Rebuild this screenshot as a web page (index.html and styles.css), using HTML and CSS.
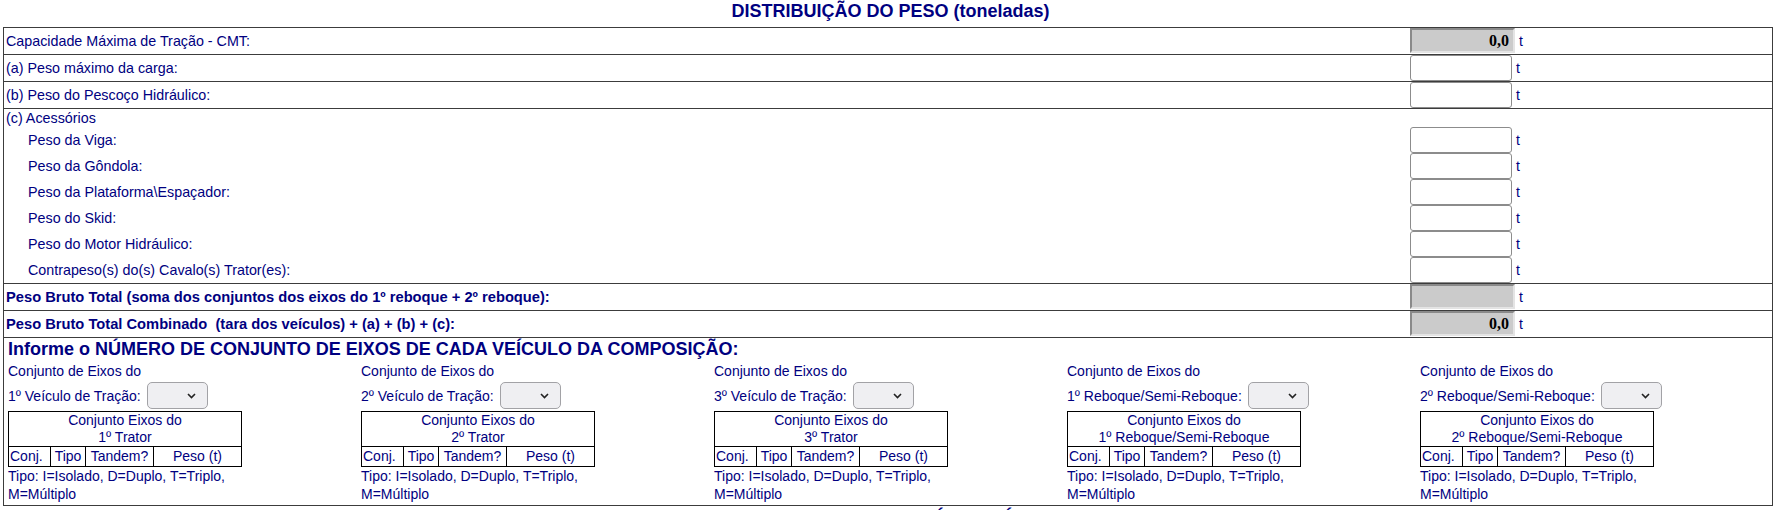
FILE: index.html
```html
<!DOCTYPE html>
<html lang="pt-BR">
<head>
<meta charset="utf-8">
<title>Distribuição do Peso</title>
<link rel="stylesheet" href="styles.css">
</head>
<body>
<div class="page">
  <h1 class="title">DISTRIBUIÇÃO DO PESO (toneladas)</h1>
  <div class="box">
    <div class="row">
      <span class="label">Capacidade Máxima de Tração - CMT:</span>
      <span class="val"><input class="ro" type="text" value="0,0" readonly><span class="unit">t</span></span>
    </div>
    <div class="row">
      <span class="label">(a) Peso máximo da carga:</span>
      <span class="val"><input class="in" type="text"><span class="unit">t</span></span>
    </div>
    <div class="row">
      <span class="label">(b) Peso do Pescoço Hidráulico:</span>
      <span class="val"><input class="in" type="text"><span class="unit">t</span></span>
    </div>
    <div class="group">
      <div class="glabel">(c) Acessórios</div>
      <div class="sub"><span class="label">Peso da Viga:</span><span class="val"><input class="in" type="text"><span class="unit">t</span></span></div>
      <div class="sub"><span class="label">Peso da Gôndola:</span><span class="val"><input class="in" type="text"><span class="unit">t</span></span></div>
      <div class="sub"><span class="label">Peso da Plataforma\Espaçador:</span><span class="val"><input class="in" type="text"><span class="unit">t</span></span></div>
      <div class="sub"><span class="label">Peso do Skid:</span><span class="val"><input class="in" type="text"><span class="unit">t</span></span></div>
      <div class="sub"><span class="label">Peso do Motor Hidráulico:</span><span class="val"><input class="in" type="text"><span class="unit">t</span></span></div>
      <div class="sub"><span class="label">Contrapeso(s) do(s) Cavalo(s) Trator(es):</span><span class="val"><input class="in" type="text"><span class="unit">t</span></span></div>
    </div>
    <div class="row strong">
      <span class="label">Peso Bruto Total (soma dos conjuntos dos eixos do 1º reboque + 2º reboque):</span>
      <span class="val"><input class="ro" type="text" value="" readonly><span class="unit">t</span></span>
    </div>
    <div class="row strong">
      <span class="label">Peso Bruto Total Combinado&nbsp; (tara dos veículos) + (a) + (b) + (c):</span>
      <span class="val"><input class="ro" type="text" value="0,0" readonly><span class="unit">t</span></span>
    </div>
    <div class="section">
      <h2 class="sec-title">Informe o NÚMERO DE CONJUNTO DE EIXOS DE CADA VEÍCULO DA COMPOSIÇÃO:</h2>
      <div class="vehicles">
        <div class="veh">
          <div class="vline">Conjunto de Eixos do</div>
          <div class="vsel">1º Veículo de Tração: <span class="sel"><svg width="9" height="6" viewBox="0 0 9 6"><path d="M1 1 L4.5 4.5 L8 1" fill="none" stroke="#222" stroke-width="1.6"/></svg></span></div>
          <table class="mini">
            <colgroup><col class="w1"><col class="w2"><col class="w3"><col></colgroup>
            <tr><th colspan="4">Conjunto Eixos do<br>1º Trator</th></tr>
            <tr><td class="c1">Conj.</td><td>Tipo</td><td>Tandem?</td><td>Peso (t)</td></tr>
          </table>
          <div class="note">Tipo: I=Isolado, D=Duplo, T=Triplo, M=Múltiplo</div>
        </div>
        <div class="veh">
          <div class="vline">Conjunto de Eixos do</div>
          <div class="vsel">2º Veículo de Tração: <span class="sel"><svg width="9" height="6" viewBox="0 0 9 6"><path d="M1 1 L4.5 4.5 L8 1" fill="none" stroke="#222" stroke-width="1.6"/></svg></span></div>
          <table class="mini">
            <colgroup><col class="w1"><col class="w2"><col class="w3"><col></colgroup>
            <tr><th colspan="4">Conjunto Eixos do<br>2º Trator</th></tr>
            <tr><td class="c1">Conj.</td><td>Tipo</td><td>Tandem?</td><td>Peso (t)</td></tr>
          </table>
          <div class="note">Tipo: I=Isolado, D=Duplo, T=Triplo, M=Múltiplo</div>
        </div>
        <div class="veh">
          <div class="vline">Conjunto de Eixos do</div>
          <div class="vsel">3º Veículo de Tração: <span class="sel"><svg width="9" height="6" viewBox="0 0 9 6"><path d="M1 1 L4.5 4.5 L8 1" fill="none" stroke="#222" stroke-width="1.6"/></svg></span></div>
          <table class="mini">
            <colgroup><col class="w1"><col class="w2"><col class="w3"><col></colgroup>
            <tr><th colspan="4">Conjunto Eixos do<br>3º Trator</th></tr>
            <tr><td class="c1">Conj.</td><td>Tipo</td><td>Tandem?</td><td>Peso (t)</td></tr>
          </table>
          <div class="note">Tipo: I=Isolado, D=Duplo, T=Triplo, M=Múltiplo</div>
        </div>
        <div class="veh">
          <div class="vline">Conjunto de Eixos do</div>
          <div class="vsel">1º Reboque/Semi-Reboque: <span class="sel"><svg width="9" height="6" viewBox="0 0 9 6"><path d="M1 1 L4.5 4.5 L8 1" fill="none" stroke="#222" stroke-width="1.6"/></svg></span></div>
          <table class="mini">
            <colgroup><col class="w1"><col class="w2"><col class="w3"><col></colgroup>
            <tr><th colspan="4">Conjunto Eixos do<br>1º Reboque/Semi-Reboque</th></tr>
            <tr><td class="c1">Conj.</td><td>Tipo</td><td>Tandem?</td><td>Peso (t)</td></tr>
          </table>
          <div class="note">Tipo: I=Isolado, D=Duplo, T=Triplo, M=Múltiplo</div>
        </div>
        <div class="veh">
          <div class="vline">Conjunto de Eixos do</div>
          <div class="vsel">2º Reboque/Semi-Reboque: <span class="sel"><svg width="9" height="6" viewBox="0 0 9 6"><path d="M1 1 L4.5 4.5 L8 1" fill="none" stroke="#222" stroke-width="1.6"/></svg></span></div>
          <table class="mini">
            <colgroup><col class="w1"><col class="w2"><col class="w3"><col></colgroup>
            <tr><th colspan="4">Conjunto Eixos do<br>2º Reboque/Semi-Reboque</th></tr>
            <tr><td class="c1">Conj.</td><td>Tipo</td><td>Tandem?</td><td>Peso (t)</td></tr>
          </table>
          <div class="note">Tipo: I=Isolado, D=Duplo, T=Triplo, M=Múltiplo</div>
        </div>
      </div>
    </div>
  </div>
  <h1 class="title next">LIMITES DOS PESOS - ANÁLISE TÉCNICA</h1>
</div>
</body>
</html>
```
FILE: styles.css
```css
html, body {
  margin: 0;
  padding: 0;
  background: #fff;
}
body {
  font-family: "Liberation Sans", Arial, sans-serif;
  font-size: 14px;
  color: #000080;
}
.page {
  width: 1781px;
}
.title {
  margin: 0;
  height: 27px;
  line-height: 23px;
  font-size: 18px;
  font-weight: bold;
  text-align: center;
  color: #000080;
}
.title.next {
  height: auto;
  margin-top: 1px;
}
.box {
  margin-left: 3px;
  width: 1768px;
  border: 1px solid #3c3c3c;
}
.row {
  display: grid;
  grid-template-columns: 1406px 1fr;
  align-items: center;
  height: 26px;
  border-bottom: 1px solid #3c3c3c;
}
.row .label {
  padding-left: 2px;
  line-height: 26px;
  font-size: 14.3px;
}
.row.strong .label {
  font-weight: bold;
  font-size: 14.7px;
}
.val {
  display: flex;
  align-items: center;
  height: 26px;
}
.unit {
  margin-left: 4px;
  line-height: 26px;
}
.in {
  box-sizing: border-box;
  width: 102px;
  height: 26px;
  margin: 0;
  padding: 0 3px;
  border: 1px solid #8c8c8c;
  border-radius: 3px;
  background: #fff;
  font: 14px "Liberation Sans", Arial, sans-serif;
}
.ro {
  box-sizing: border-box;
  width: 105px;
  height: 25px;
  margin: 0 0 1px 0;
  padding: 0 4px 0 2px;
  border-style: solid;
  border-width: 2px;
  border-color: #8a8a8a #e4e4e4 #e4e4e4 #8a8a8a;
  border-radius: 0;
  background: #cbcbcb;
  font: bold 16px "Liberation Serif", "Times New Roman", serif;
  color: #000;
  text-align: right;
  outline: none;
}
.group {
  border-bottom: 1px solid #3c3c3c;
}
.glabel {
  padding-left: 2px;
  height: 18px;
  line-height: 18px;
  font-size: 14.3px;
}
.sub {
  display: grid;
  grid-template-columns: 1406px 1fr;
  align-items: center;
  height: 26px;
}
.sub .label {
  padding-left: 24px;
  line-height: 26px;
  font-size: 14.3px;
}
.section {
  padding-bottom: 2px;
}
.sec-title {
  margin: 0;
  padding-left: 4px;
  font-size: 18px;
  font-weight: bold;
  line-height: 22px;
  height: 22px;
  color: #000080;
}
.vehicles {
  display: grid;
  grid-template-columns: repeat(5, 353px);
}
.veh {
  padding-left: 4px;
}
.vline {
  height: 22px;
  line-height: 23px;
}
.vsel {
  display: flex;
  align-items: center;
  height: 27px;
  white-space: pre;
}
.sel {
  display: inline-flex;
  align-items: center;
  justify-content: flex-end;
  box-sizing: border-box;
  width: 61px;
  height: 27px;
  margin-left: 2px;
  padding-right: 11px;
  border: 1px solid #a2a2a6;
  border-radius: 5px;
  background: #efeff2;
}
.mini {
  margin-top: 2px;
  border-collapse: collapse;
  border: 1px solid #000;
  width: 234px;
  table-layout: fixed;
  font-size: 14px;
  color: #000080;
}
.mini .w1 { width: 42px; }
.mini .w2 { width: 35px; }
.mini .w3 { width: 68px; }
.mini th {
  font-weight: normal;
  line-height: 17px;
  padding: 0;
  text-align: center;
  border: 1px solid #000;
}
.mini td {
  padding: 0;
  height: 19px;
  line-height: 19px;
  text-align: center;
  border: 1px solid #000;
  white-space: nowrap;
}
.mini td.c1 {
  text-align: left;
  padding-left: 1px;
}
.note {
  width: 234px;
  line-height: 18px;
}
```
